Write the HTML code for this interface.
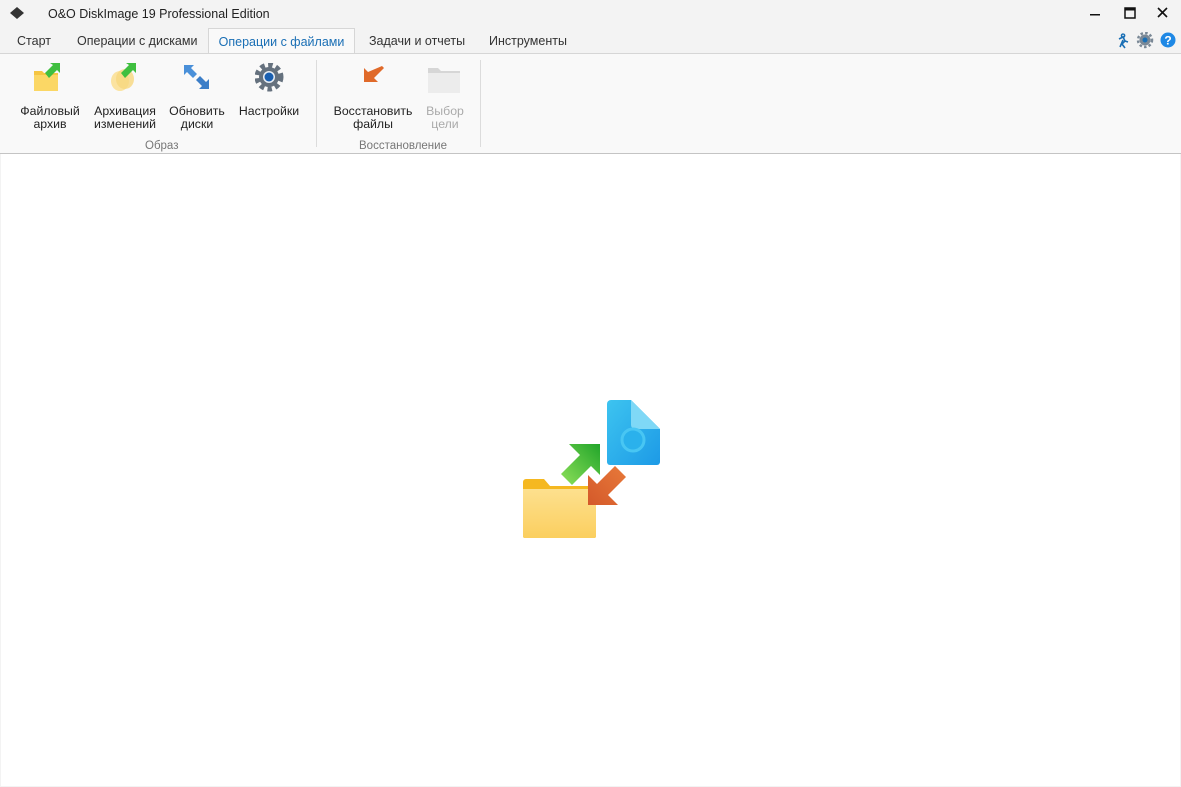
<!DOCTYPE html>
<html><head><meta charset="utf-8"><style>
*{margin:0;padding:0;box-sizing:border-box}
body{width:1181px;height:787px;background:#f3f3f3;font-family:"Segoe UI","Liberation Sans","DejaVu Sans",sans-serif;font-size:12px;color:#222;position:relative;overflow:hidden}
.title{position:absolute;left:48px;top:7px;font-size:12.5px;color:#222}
.tabs{position:absolute;top:28px;left:0;height:26px;width:100%}
.tab{position:absolute;top:0;height:26px;line-height:27px;font-size:12.5px;color:#333}
.tab.act{background:#f9f9f9;border:1px solid #d6d6d6;border-bottom:none;color:#1a6fb5;height:27px}
.ribbon{position:absolute;top:53px;left:0;width:1181px;height:101px;background:#f9f9f9;border-top:1px solid #d6d6d6;border-bottom:1px solid #c4c4c4}
.btn{position:absolute;top:51px;text-align:center;font-size:12.3px;line-height:13px;color:#222}
.grp{position:absolute;top:80px;font-size:11.5px;color:#777}
.sep{position:absolute;top:6px;width:1px;height:87px;background:#dcdcdc}
.content{position:absolute;top:154px;left:1px;width:1179px;height:632px;background:#fff}
</style></head><body>
<svg style="position:absolute;left:9px;top:6px" width="16" height="14"><path d="M8 1 L15 7 L8 13 L1 7Z" fill="#333"/></svg>
<div class="title">O&amp;O DiskImage 19 Professional Edition</div>
<svg style="position:absolute;left:1090px;top:6px" width="85" height="16"><rect x="0" y="8" width="10" height="1.5" fill="#111"/><rect x="35" y="2" width="10" height="10" fill="none" stroke="#111" stroke-width="1.5"/><rect x="35" y="2" width="10" height="2.5" fill="#111"/><path d="M68 2 L77 11 M77 2 L68 11" stroke="#111" stroke-width="1.6"/></svg>
<div class="tabs">
<div class="tab" style="left:17px">Старт</div>
<div class="tab" style="left:77px">Операции с дисками</div>
<div class="tab act" style="left:208px;width:147px;text-align:center">Операции с файлами</div>
<div class="tab" style="left:369px">Задачи и отчеты</div>
<div class="tab" style="left:489px">Инструменты</div>
</div>
<svg style="position:absolute;left:1116px;top:32px" width="62" height="18">
<path d="M7 2 a1.6 1.6 0 1 0 .1 0 M3 7 L7 5 L9 9 L6 12 M9 9 L12 10 M7 8 L4 15 M6 12 L9 16" stroke="#1a6fb5" stroke-width="1.6" fill="none"/>
<circle cx="29" cy="8" r="5.5" fill="#7a8896"/><circle cx="29" cy="8" r="7" fill="none" stroke="#7a8896" stroke-width="2.5" stroke-dasharray="2.5 2.2"/><circle cx="29" cy="8" r="2.5" fill="#1a6fb5"/>
<circle cx="52" cy="8" r="7.5" fill="#1e88e5"/><text x="52" y="12.5" font-size="12" font-weight="bold" fill="#fff" text-anchor="middle" font-family="Liberation Sans">?</text>
</svg>
<div class="ribbon">
<svg style="position:absolute;left:33px;top:7px" width="28" height="32"><path d="M1 10 h8 l2 2 h14 v18 h-24z" fill="#f5c542"/><rect x="1" y="14" width="24" height="16" fill="#fbd765"/><path d="M12 12 L20 4 L17 2 H27 V12 L24 9 L16 17Z" fill="#3fbf3f"/></svg>
<svg style="position:absolute;left:107px;top:7px" width="30" height="32"><ellipse cx="13" cy="20" rx="9" ry="10" fill="#fbe3a0"/><ellipse cx="18" cy="18" rx="9" ry="10" fill="#f8d77e" opacity=".8"/><path d="M14 12 L22 4 L19 2 H29 V12 L26 9 L18 17Z" fill="#3fbf3f"/></svg>
<svg style="position:absolute;left:182px;top:9px" width="30" height="28"><path d="M2 2 H12 L9 5 L15 11 L11 15 L5 9 L2 12Z" fill="#4a90d9"/><path d="M27 26 H17 L20 23 L14 17 L18 13 L24 19 L27 16Z" fill="#3b7ec8"/></svg>
<svg style="position:absolute;left:255px;top:9px" width="30" height="30"><circle cx="14" cy="14" r="10" fill="#65717e"/><circle cx="14" cy="14" r="12" fill="none" stroke="#65717e" stroke-width="5" stroke-dasharray="4.5 3.4"/><circle cx="14" cy="14" r="6" fill="#e8eef5"/><circle cx="14" cy="14" r="4.5" fill="#1a5fb0"/></svg>
<svg style="position:absolute;left:360px;top:10px" width="26" height="26"><path d="M22 2 L24 4 L14 14 L18 18 H4 V4 L8 8Z" fill="#e06a2a"/></svg>
<svg style="position:absolute;left:427px;top:12px" width="34" height="28"><path d="M1 2 h10 l3 3 h19 v22 h-32z" fill="#d6d6d6"/><rect x="1" y="7" width="32" height="20" fill="#ececec"/></svg>
<div class="btn" style="left:14px;width:72px">Файловый<br>архив</div>
<div class="btn" style="left:90px;width:70px">Архивация<br>изменений</div>
<div class="btn" style="left:165px;width:64px">Обновить<br>диски</div>
<div class="btn" style="left:236px;width:66px">Настройки</div>
<div class="grp" style="left:145px;top:86px">Образ</div>
<div class="sep" style="left:316px"></div>
<div class="btn" style="left:331px;width:84px">Восстановить<br>файлы</div>
<div class="btn" style="left:420px;width:50px;color:#aaa">Выбор<br>цели</div>
<div class="grp" style="left:359px;top:86px">Восстановление</div>
<div class="sep" style="left:480px"></div>
</div>
<div class="content">
<svg style="position:absolute;left:519px;top:246px" width="142" height="140">
<defs><linearGradient id="b" x1="0" y1="0" x2="1" y2="1"><stop offset="0" stop-color="#3dc4f0"/><stop offset="1" stop-color="#1d9ae6"/></linearGradient>
<linearGradient id="g" x1="0" y1="1" x2="1" y2="0"><stop offset="0" stop-color="#8ee05a"/><stop offset="1" stop-color="#22a52a"/></linearGradient>
<linearGradient id="o" x1="1" y1="0" x2="0" y2="1"><stop offset="0" stop-color="#e87a3a"/><stop offset="1" stop-color="#d4592a"/></linearGradient>
<linearGradient id="y" x1="0" y1="0" x2="0" y2="1"><stop offset="0" stop-color="#fde08e"/><stop offset="1" stop-color="#fbcf5f"/></linearGradient></defs>
<path d="M91 0 H111 L140 29 V62 a3 3 0 0 1 -3 3 H90 a3 3 0 0 1 -3 -3 V4 a4 4 0 0 1 4 -4Z" fill="url(#b)"/>
<path d="M111 0 V25 a4 4 0 0 0 4 4 H140Z" fill="#7fd8f6"/>
<circle cx="113" cy="40" r="11" fill="#2ab1ec" stroke="#48c6f3" stroke-width="3"/>
<path d="M80 44 L80 75 L71 66 L52 85 L41 74 L60 55 L49 44Z" fill="url(#g)"/>
<path d="M3 82 a3 3 0 0 1 3 -3 H24 L30 86 H76 V136 a2 2 0 0 1 -2 2 H5 a2 2 0 0 1 -2 -2Z" fill="#f5b820"/>
<path d="M3 89 H74 a2 2 0 0 1 2 2 V136 a2 2 0 0 1 -2 2 H5 a2 2 0 0 1 -2 -2Z" fill="url(#y)"/>
<path d="M68 105 L68 75 L77 84 L95 66 L106 77 L88 95 L98 105Z" fill="url(#o)"/>
</svg>
</div>
</body></html>
